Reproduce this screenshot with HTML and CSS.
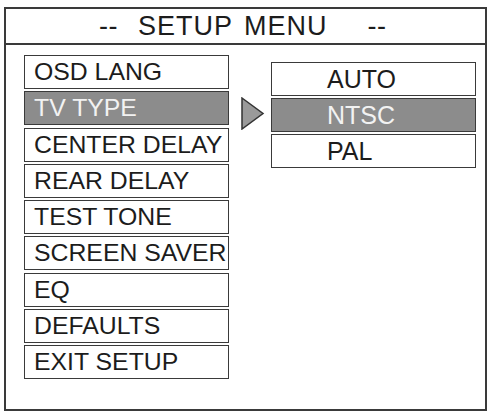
FILE: index.html
```html
<!DOCTYPE html>
<html lang="en">
<head>
    <meta charset="UTF-8">
    <meta name="viewport" content="width=device-width, initial-scale=1.0">
    <title>Setup Menu</title>
    <link rel="stylesheet" href="styles.css">
</head>
<body>
    <div class="screen">
        <div class="title">
            <span class="dash">--</span>
            <span class="title-text">SETUP MENU</span>
            <span class="dash dash-right">--</span>
        </div>

        <div class="menu-area">
            <ul class="menu">
                <li class="item">OSD LANG</li>
                <li class="item selected">TV TYPE</li>
                <li class="item">CENTER DELAY</li>
                <li class="item">REAR DELAY</li>
                <li class="item">TEST TONE</li>
                <li class="item">SCREEN SAVER</li>
                <li class="item">EQ</li>
                <li class="item">DEFAULTS</li>
                <li class="item">EXIT SETUP</li>
            </ul>

            <svg class="pointer" width="24" height="33" viewBox="0 0 24 33">
                <polygon points="1,1 22,16.5 1,32" fill="#9a9a9a" stroke="#333" stroke-width="1.5" stroke-linejoin="miter"/>
            </svg>

            <ul class="submenu">
                <li class="option">AUTO</li>
                <li class="option selected">NTSC</li>
                <li class="option">PAL</li>
            </ul>
        </div>
    </div>
</body>
</html>
```

FILE: styles.css
```css
* {
    box-sizing: border-box;
    margin: 0;
    padding: 0;
}

body {
    font-family: "Liberation Sans", Arial, sans-serif;
    background: white;
    color: #1c1c1c;
}

.screen {
    width: 483px;
    height: 404px;
    margin: 7px 0 0 4px;
    border: 2px solid #3a3a3a;
}

.title {
    height: 36px;
    border-bottom: 2px solid #3a3a3a;
    display: flex;
    align-items: center;
    padding-left: 93px;
    font-size: 27px;
}

.dash {
    letter-spacing: 0.5px;
}

.title-text {
    margin-left: 20px;
    letter-spacing: 1px;
    word-spacing: 3px;
}

.dash-right {
    margin-left: 40px;
}

.menu-area {
    display: flex;
    align-items: flex-start;
    padding: 10px 0 0 18px;
}

ul {
    list-style: none;
}

.menu {
    width: 205px;
    display: flex;
    flex-direction: column;
    gap: 2.25px;
}

.item {
    height: 34px;
    border: 1.5px solid #3a3a3a;
    display: flex;
    align-items: center;
    padding-left: 9px;
    font-size: 24.8px;
    white-space: nowrap;
}

.selected {
    background: #8c8c8c;
    color: #f2f2f2;
}

.pointer {
    margin: 42px 0 0 12px;
}

.submenu {
    width: 205px;
    margin: 7px 0 0 6px;
    display: flex;
    flex-direction: column;
    gap: 2px;
}

.option {
    height: 34px;
    border: 1.5px solid #3a3a3a;
    display: flex;
    align-items: center;
    padding-left: 55px;
    font-size: 25px;
}
```
